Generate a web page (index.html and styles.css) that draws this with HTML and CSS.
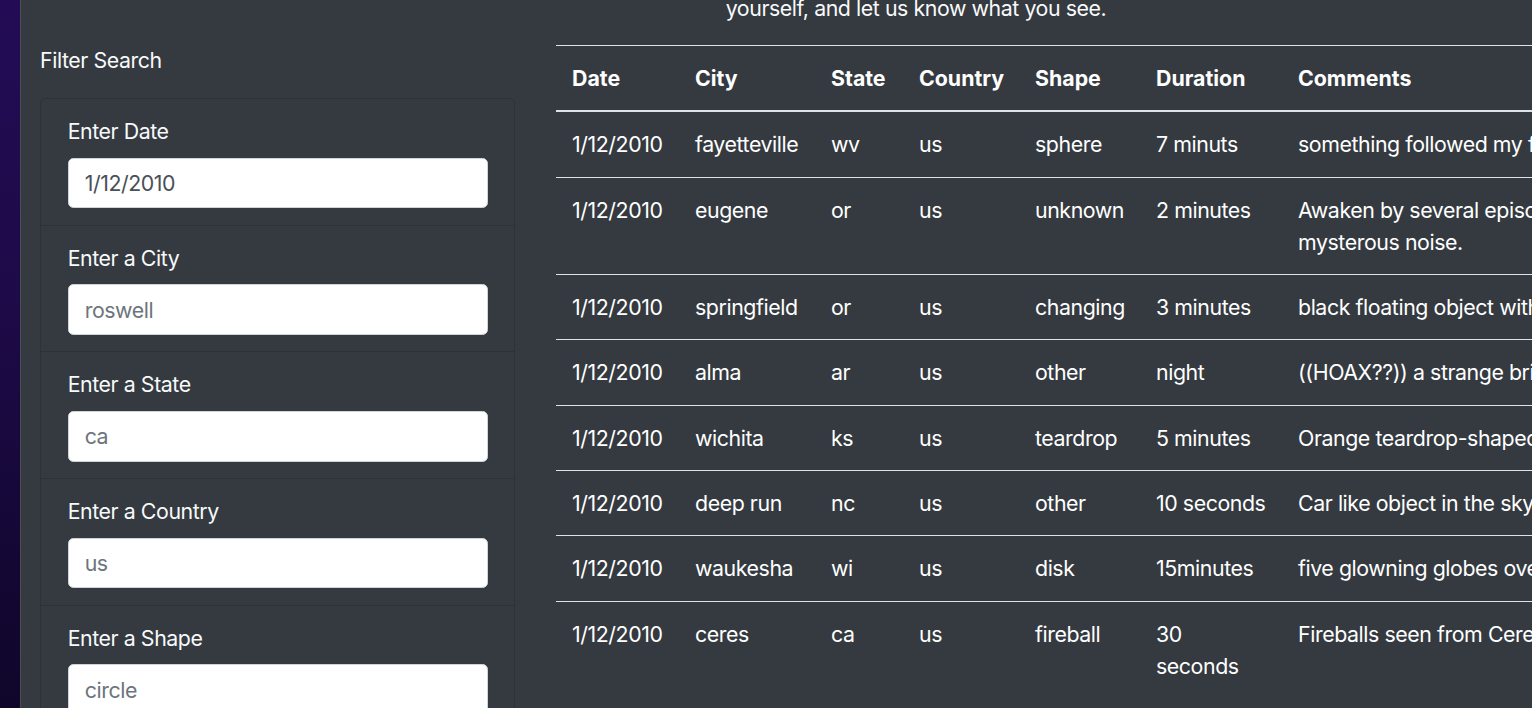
FILE: index.html
```html
<!DOCTYPE html>
<html lang="en">
<head>
<meta charset="utf-8">
<title>UFO Sightings</title>
<link rel="stylesheet" href="styles.css">
</head>
<body>
<div class="frame">
  <div class="edge"></div>
  <div class="app">
    <aside class="sidebar">
      <div class="sidebar-title">Filter Search</div>
      <ul class="filters">
        <li class="filter">
          <label class="filter-label" for="date">Enter Date</label>
          <input class="filter-input" id="date" type="text" value="1/12/2010">
        </li>
        <li class="filter">
          <label class="filter-label" for="city">Enter a City</label>
          <input class="filter-input" id="city" type="text" placeholder="roswell">
        </li>
        <li class="filter">
          <label class="filter-label" for="state">Enter a State</label>
          <input class="filter-input" id="state" type="text" placeholder="ca">
        </li>
        <li class="filter">
          <label class="filter-label" for="country">Enter a Country</label>
          <input class="filter-input" id="country" type="text" placeholder="us">
        </li>
        <li class="filter">
          <label class="filter-label" for="shape">Enter a Shape</label>
          <input class="filter-input" id="shape" type="text" placeholder="circle">
        </li>
      </ul>
    </aside>
    <main class="content">
      <p class="intro">yourself, and let us know what you see.</p>
      <table class="sightings">
        <colgroup>
          <col class="c-date"><col class="c-city"><col class="c-state"><col class="c-country"><col class="c-shape"><col class="c-duration"><col class="c-comments">
        </colgroup>
        <thead>
          <tr><th>Date</th><th>City</th><th>State</th><th>Country</th><th>Shape</th><th>Duration</th><th>Comments</th></tr>
        </thead>
        <tbody>
          <tr><td>1/12/2010</td><td>fayetteville</td><td>wv</td><td>us</td><td>sphere</td><td>7 minuts</td><td>something followed my friend home</td></tr>
          <tr><td>1/12/2010</td><td>eugene</td><td>or</td><td>us</td><td>unknown</td><td>2 minutes</td><td>Awaken by several episodes of a<br>mysterous noise.</td></tr>
          <tr><td>1/12/2010</td><td>springfield</td><td>or</td><td>us</td><td>changing</td><td>3 minutes</td><td>black floating object with lights</td></tr>
          <tr><td>1/12/2010</td><td>alma</td><td>ar</td><td>us</td><td>other</td><td>night</td><td>((HOAX??)) a strange bright light</td></tr>
          <tr><td>1/12/2010</td><td>wichita</td><td>ks</td><td>us</td><td>teardrop</td><td>5 minutes</td><td>Orange teardrop-shaped object</td></tr>
          <tr><td>1/12/2010</td><td>deep run</td><td>nc</td><td>us</td><td>other</td><td>10 seconds</td><td>Car like object in the sky</td></tr>
          <tr><td>1/12/2010</td><td>waukesha</td><td>wi</td><td>us</td><td>disk</td><td>15minutes</td><td>five glowning globes over the city</td></tr>
          <tr><td>1/12/2010</td><td>ceres</td><td>ca</td><td>us</td><td>fireball</td><td>30<br>seconds</td><td>Fireballs seen from Ceres, CA</td></tr>
        </tbody>
      </table>
    </main>
  </div>
</div>
</body>
</html>
```

FILE: styles.css
```css
html, body {
  margin: 0;
  padding: 0;
  height: 100%;
  overflow: hidden;
}

body {
  font-family: Inter, "Noto Sans", "Liberation Sans", sans-serif;
  font-size: 21.33px;
  line-height: 32px;
  letter-spacing: -0.02em;
  color: #f8f9fa;
  background: #1a0a3d;
}

.frame {
  display: flex;
  height: 100vh;
}

.edge {
  flex: none;
  width: 20px;
  background: linear-gradient(180deg, #230c55 0%, #1d0a47 45%, #140734 80%, #10062a 100%);
}

.app {
  flex: 1;
  display: flex;
  align-items: flex-start;
  background: #343a40;
  border-left: 1px solid #4a4f56;
  padding-left: 19px;
  overflow: hidden;
  min-width: 0;
}

.sidebar {
  flex: none;
  width: 475px;
  padding-top: 44px;
}

.sidebar-title {
  line-height: 32px;
  margin-bottom: 22px;
}

.filters {
  list-style: none;
  margin: 0;
  padding: 0;
  border: 1px solid rgba(0, 0, 0, 0.125);
  border-radius: 5px;
}

.filter {
  padding: 16px 26.67px 16.33px;
  border-bottom: 1px solid rgba(0, 0, 0, 0.125);
}

.filter-label {
  display: block;
  line-height: 32px;
  margin-bottom: 10.67px;
}

.filter-input {
  display: block;
  box-sizing: border-box;
  width: 420px;
  height: 50.67px;
  padding: 8px 16px;
  font-family: inherit;
  font-size: 21.33px;
  line-height: 32px;
  letter-spacing: -0.02em;
  color: #495057;
  background: #fff;
  border: 1px solid #ced4da;
  border-radius: 5.33px;
}

.filter-input::placeholder {
  color: #6c757d;
  opacity: 1;
}

.content {
  flex: none;
  margin-left: 41px;
}

.intro {
  width: 720px;
  margin: -8px 0 21px;
  text-align: center;
  line-height: 32px;
}

.sightings {
  table-layout: fixed;
  border-collapse: collapse;
  width: 1246px;
  color: #fff;
}

.c-date { width: 123px; }
.c-city { width: 136px; }
.c-state { width: 88px; }
.c-country { width: 116px; }
.c-shape { width: 121px; }
.c-duration { width: 142px; }
.c-comments { width: 520px; }

.sightings th,
.sightings td {
  text-align: left;
  vertical-align: top;
  padding: 16px 16px 16.33px;
  border-top: 1px solid #dee2e6;
  white-space: nowrap;
}

.sightings th {
  font-weight: 700;
  letter-spacing: 0;
  border-bottom: 2px solid #dee2e6;
}
```
